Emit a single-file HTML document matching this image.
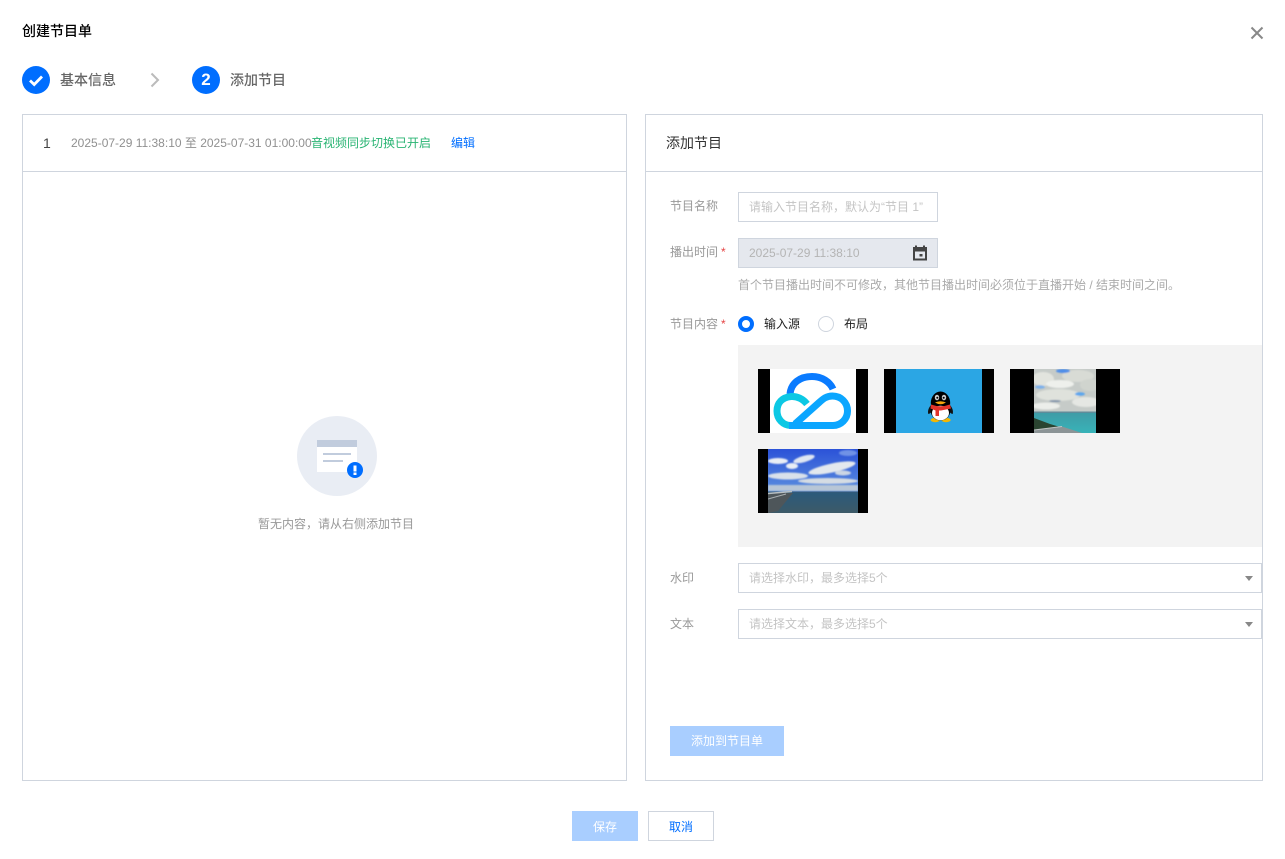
<!DOCTYPE html>
<html lang="zh">
<head>
<meta charset="utf-8">
<title>创建节目单</title>
<style>
html,body{margin:0;padding:0;background:#fff;}
body{width:1285px;height:859px;position:relative;overflow:hidden;font-family:"Liberation Sans","Noto Sans CJK SC",sans-serif;font-size:12px;color:#000;}
.a{position:absolute;white-space:nowrap;}
.box{position:absolute;box-sizing:border-box;border:1px solid #cfd5de;background:#fff;}
.lab{position:absolute;left:670px;color:#999;line-height:18px;white-space:nowrap;}
.req{color:#e54545;margin-left:3px;}
.ph{position:absolute;color:#c4c4c4;line-height:18px;white-space:nowrap;}
.thumb{position:absolute;width:110px;height:64px;background:#000;overflow:hidden;}
.thumb svg{position:absolute;left:0;top:0;display:block;}
.caret{position:absolute;width:0;height:0;border-left:4px solid transparent;border-right:4px solid transparent;border-top:5px solid #888;}
</style>
</head>
<body>
<div class="a" style="left:22px;top:21px;font-size:14px;line-height:20px;font-weight:500;color:#000;">创建节目单</div>
<svg class="a" style="left:1250px;top:26px" width="14" height="14" viewBox="0 0 14 14"><path d="M1.500 1.500L12.500 12.500M12.500 1.500L1.500 12.500" stroke="#888" stroke-width="2" fill="none"/></svg>

<svg class="a" style="left:22px;top:66px" width="28" height="28" viewBox="0 0 28 28"><circle cx="14" cy="14" r="14" fill="#006eff"/><path d="M8 14.500l4.200 4L20 10.500" stroke="#fff" stroke-width="2.800" fill="none"/></svg>
<div class="a" style="left:60px;top:70px;font-size:14px;line-height:20px;color:#666;font-weight:500;">基本信息</div>
<svg class="a" style="left:149px;top:72px" width="12" height="16" viewBox="0 0 12 16"><path d="M2.500 1.500L9 8L2.500 14.500" stroke="#bbb" stroke-width="2" fill="none"/></svg>
<svg class="a" style="left:192px;top:66px" width="28" height="28" viewBox="0 0 28 28"><circle cx="14" cy="14" r="14" fill="#006eff"/></svg>
<div class="a" style="left:192px;top:66px;width:28px;text-align:center;font-size:17px;line-height:28px;font-weight:bold;color:#fff;">2</div>
<div class="a" style="left:230px;top:70px;font-size:14px;line-height:20px;color:#666;font-weight:500;">添加节目</div>

<!-- left panel -->
<div class="box" style="left:22px;top:114px;width:605px;height:667px;"></div>
<div class="a" style="left:23px;top:171px;width:603px;height:1px;background:#cfd5de;"></div>
<div class="a" style="left:43px;top:134px;font-size:14px;line-height:18px;color:#444;">1</div>
<div class="a" style="left:71px;top:134px;line-height:18px;color:#909090;">2025-07-29 11:38:10 至 2025-07-31 01:00:00</div>
<div class="a" style="left:311px;top:134px;line-height:18px;color:#29b473;">音视频同步切换已开启</div>
<div class="a" style="left:451px;top:134px;line-height:18px;color:#006eff;">编辑</div>

<svg class="a" style="left:297px;top:416px" width="80" height="80" viewBox="0 0 80 80">
<circle cx="40" cy="40" r="40" fill="#e9edf4"/>
<rect x="20" y="24" width="40" height="32" fill="#fff"/>
<rect x="20" y="24" width="40" height="7" fill="#c1ccdd"/>
<rect x="26" y="37" width="28" height="2" fill="#c1ccdd"/>
<rect x="26" y="44" width="20" height="2" fill="#c1ccdd"/>
<circle cx="58" cy="54" r="8" fill="#006eff"/>
<rect x="56.500" y="49.500" width="3" height="6" fill="#fff"/>
<rect x="56.500" y="56.500" width="3" height="2.500" fill="#fff"/>
</svg>
<div class="a" style="left:258px;top:515px;line-height:18px;color:#999;">暂无内容，请从右侧添加节目</div>

<!-- right panel -->
<div class="box" style="left:645px;top:114px;width:618px;height:667px;"></div>
<div class="a" style="left:646px;top:171px;width:616px;height:1px;background:#cfd5de;"></div>
<div class="a" style="left:666px;top:133px;font-size:14px;line-height:20px;color:#333;">添加节目</div>

<div class="lab" style="top:197px;">节目名称</div>
<div class="box" style="left:738px;top:192px;width:200px;height:30px;"></div>
<div class="ph" style="left:749px;top:198px;">请输入节目名称，默认为“节目 1”</div>

<div class="lab" style="top:243px;">播出时间<span class="req">*</span></div>
<div class="box" style="left:738px;top:238px;width:200px;height:30px;background:#e5e8ee;"></div>
<div class="ph" style="left:749px;top:244px;color:#b4b4b4;">2025-07-29 11:38:10</div>
<svg class="a" style="left:912px;top:245px" width="16" height="16" viewBox="0 0 16 16"><path fill="#444" fill-rule="evenodd" d="M3 0.500h2V2h6V0.500h2V2h2v13.500H1V2h2V0.500zM3 6.500v7h10v-7H3z"/><rect x="7.500" y="9" width="3" height="2.500" fill="#444"/></svg>
<div class="a" style="left:738px;top:276px;line-height:18px;color:#aaa;">首个节目播出时间不可修改，其他节目播出时间必须位于直播开始 / 结束时间之间。</div>

<div class="lab" style="top:315px;">节目内容<span class="req">*</span></div>
<svg class="a" style="left:738px;top:316px" width="16" height="16" viewBox="0 0 16 16"><circle cx="8" cy="8" r="6" fill="#fff" stroke="#006eff" stroke-width="4"/></svg>
<div class="a" style="left:764px;top:315px;line-height:18px;color:#222;">输入源</div>
<svg class="a" style="left:818px;top:316px" width="16" height="16" viewBox="0 0 16 16"><circle cx="8" cy="8" r="7.500" fill="#fff" stroke="#cfd5de"/></svg>
<div class="a" style="left:844px;top:315px;line-height:18px;color:#222;">布局</div>

<div class="a" style="left:738px;top:345px;width:524px;height:202px;background:#f3f3f3;"></div>

<div class="thumb" style="left:758px;top:369px;">
<svg width="110" height="64" viewBox="0 0 110 64">
<rect x="12" width="86" height="64" fill="#fff"/>
<path d="M32 25C33 14 42 7.500 54 7.500C64 7.500 72 13 75 20" fill="none" stroke="#0a7bff" stroke-width="7"/>
<path d="M49 35C45 30 39 27 33 27.500C24 28.500 19 34 19 42C19 50 25 56.500 33 56.500" fill="none" stroke="#0cc8e4" stroke-width="7"/>
<path d="M31 56.500H75C83 56.500 89.500 50 89.500 42C89.500 33.500 83 27 74.500 27C68 27 65 30 60 34.500L37 55" fill="none" stroke="#0ba6ff" stroke-width="7"/>
</svg>
</div>

<div class="thumb" style="left:884px;top:369px;">
<svg width="110" height="64" viewBox="0 0 110 64">
<rect x="12" width="86" height="64" fill="#2ba6e4"/>
<path d="M47 36c-2.500 3-3.500 6-2.700 9 1.700-.3 3-1.500 3.700-3zM66 36c2.500 3 3.500 6 2.700 9-1.700-.3-3-1.500-3.700-3z" fill="#111"/>
<ellipse cx="51.300" cy="51" rx="4.700" ry="2.200" fill="#f2b705"/>
<ellipse cx="62" cy="51" rx="4.700" ry="2.200" fill="#f2b705"/>
<ellipse cx="56.500" cy="34" rx="9.700" ry="11.500" fill="#000"/>
<ellipse cx="56.500" cy="42" rx="9.700" ry="9.500" fill="#000"/>
<ellipse cx="56.500" cy="44" rx="8.500" ry="7.300" fill="#fff"/>
<ellipse cx="53" cy="28.500" rx="2.200" ry="2.800" fill="#ccc"/>
<ellipse cx="60" cy="28.500" rx="2.200" ry="2.800" fill="#ccc"/>
<circle cx="53.300" cy="28.800" r="1" fill="#000"/>
<circle cx="59.700" cy="28.800" r="1" fill="#000"/>
<path d="M51 33.500Q56.500 31 62 33.500Q56.500 37 51 33.500z" fill="#f5a40c"/>
<path d="M47 35.500Q56.500 39 66 35.500L67 39.500L57 41.500H55V47H51.500V41.500L46.500 39.500z" fill="#e2332a"/>
</svg>
</div>

<div class="thumb" style="left:1010px;top:369px;">
<svg width="110" height="64" viewBox="0 0 110 64">
<defs>
<filter id="b1" x="-20%" y="-20%" width="140%" height="140%"><feGaussianBlur stdDeviation="0.800"/></filter>
<clipPath id="c1"><rect x="24" width="62" height="64"/></clipPath>
<linearGradient id="s1" x1="0" y1="0" x2="0" y2="1"><stop offset="0" stop-color="#3f9ba6"/><stop offset="1" stop-color="#38b3b8"/></linearGradient>
</defs>
<g clip-path="url(#c1)">
<rect x="24" width="62" height="43" fill="#c6cbc8"/>
<g filter="url(#b1)">
<ellipse cx="33" cy="10" rx="11" ry="7" fill="#e2e4de"/>
<ellipse cx="68" cy="7" rx="16" ry="6" fill="#d8dbd5"/>
<ellipse cx="50" cy="15" rx="14" ry="4" fill="#eef0ec"/>
<ellipse cx="48" cy="26" rx="22" ry="6" fill="#dfe2dc"/>
<ellipse cx="76" cy="33" rx="14" ry="5" fill="#e5e7e3"/>
<ellipse cx="36" cy="37" rx="14" ry="3.500" fill="#eceeea"/>
<ellipse cx="80" cy="16" rx="10" ry="6" fill="#d0d4ce"/>
<ellipse cx="70" cy="25" rx="5" ry="1.800" fill="#5aa5ee"/>
<ellipse cx="30" cy="18" rx="5" ry="1.800" fill="#7cb0ea"/>
<ellipse cx="53" cy="2" rx="7" ry="2" fill="#4d8de8"/>
<ellipse cx="45" cy="32" rx="6" ry="1" fill="#7d90a8"/>
</g>
<rect x="24" y="43" width="62" height="21" fill="url(#s1)"/>
<rect x="24" y="42.500" width="62" height="1.500" fill="#5f8c9a"/>
<path d="M24 49L40 55L50 58L24 62z" fill="#2a4430"/>
<path d="M24 61L52 57.500L72 64H24z" fill="#8c9496"/>
<path d="M24 61L52 57.500" stroke="#c0c4c3" stroke-width="1" fill="none"/>
</g>
</svg>
</div>

<div class="thumb" style="left:758px;top:449px;">
<svg width="110" height="64" viewBox="0 0 110 64">
<defs>
<filter id="b2" x="-20%" y="-20%" width="140%" height="140%"><feGaussianBlur stdDeviation="0.800"/></filter>
<clipPath id="c2"><rect x="10" width="90" height="64"/></clipPath>
<linearGradient id="s2" x1="0" y1="0" x2="0" y2="1"><stop offset="0" stop-color="#2b52d8"/><stop offset="1" stop-color="#5c8fde"/></linearGradient>
<linearGradient id="w2" x1="0" y1="0" x2="0" y2="1"><stop offset="0" stop-color="#2a5a7c"/><stop offset="1" stop-color="#3d5a68"/></linearGradient>
</defs>
<g clip-path="url(#c2)">
<rect x="10" width="90" height="43" fill="url(#s2)"/>
<g filter="url(#b2)">
<ellipse cx="20" cy="12" rx="10" ry="3" fill="#e9eef5"/>
<ellipse cx="34" cy="17" rx="6" ry="3" fill="#e9eef5"/>
<ellipse cx="46" cy="10" rx="11" ry="3.200" fill="#dfe6f2" transform="rotate(-15 46 10)"/>
<ellipse cx="74" cy="19" rx="24" ry="4.500" fill="#e3e8ee" transform="rotate(-12 74 19)"/>
<ellipse cx="30" cy="27" rx="20" ry="3.500" fill="#d9e1ea"/>
<ellipse cx="85" cy="24" rx="8" ry="2.500" fill="#ccd6e4"/>
<rect x="10" y="36" width="90" height="6" fill="#b8c6d6"/>
<ellipse cx="70" cy="32" rx="30" ry="3" fill="#d5dce3"/>
<ellipse cx="90" cy="4" rx="9" ry="3" fill="#6f92e6"/>
</g>
<rect x="10" y="43" width="90" height="21" fill="url(#w2)"/>
<rect x="10" y="42.500" width="90" height="1.200" fill="#34597a"/>
<path d="M10 44H35L20 62L10 64z" fill="#4e565a"/>
<path d="M10 44.500L34 42.500" stroke="#b8bfc2" stroke-width="1.500" fill="none"/>
<path d="M10 50L28 45" stroke="#a8afb2" stroke-width="1" fill="none"/>
</g>
</svg>
</div>

<div class="lab" style="top:569px;">水印</div>
<div class="box" style="left:738px;top:563px;width:524px;height:30px;"></div>
<div class="ph" style="left:749px;top:569px;">请选择水印，最多选择5个</div>
<div class="caret" style="left:1245px;top:576px;"></div>

<div class="lab" style="top:615px;">文本</div>
<div class="box" style="left:738px;top:609px;width:524px;height:30px;"></div>
<div class="ph" style="left:749px;top:615px;">请选择文本，最多选择5个</div>
<div class="caret" style="left:1245px;top:622px;"></div>

<div class="a" style="left:670px;top:726px;width:114px;height:30px;background:#a9ceff;color:#fff;text-align:center;line-height:30px;">添加到节目单</div>

<div class="a" style="left:572px;top:811px;width:66px;height:30px;background:#a9ceff;color:#fff;text-align:center;line-height:32px;">保存</div>
<div class="box" style="left:648px;top:811px;width:66px;height:30px;color:#006eff;text-align:center;line-height:30px;">取消</div>
</body>
</html>
